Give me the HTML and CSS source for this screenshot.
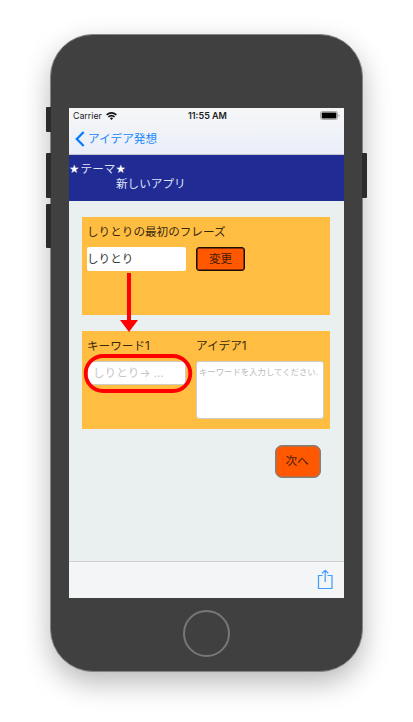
FILE: index.html
```html
<!DOCTYPE html>
<html lang="ja">
<head>
<meta charset="utf-8">
<title>アイデア発想</title>
<link rel="stylesheet" href="styles.css">
</head>
<body>
<div class="phone">
  <i class="side mute"></i><i class="side up"></i><i class="side down"></i><i class="side power"></i>
  <div class="screen">
    <header class="top">
      <div class="status">
        <span class="carrier">Carrier
          <svg width="11" height="8" viewBox="0 0 11 8" fill="none" stroke="#111" stroke-width="1.6"><path d="M.6 2.9Q5.5-1.1 10.4 2.9M2.4 4.9Q5.5 2.3 8.6 4.9"/><path d="M3.8 6.1Q5.5 4.8 7.2 6.1L5.5 7.900z" fill="#111" stroke="none"/></svg>
        </span>
        <b class="time">11:55 AM</b>
        <svg class="battery" width="20" height="9" viewBox="0 0 20 9"><rect x=".5" y=".5" width="17" height="8" rx="1.8" fill="#fff" stroke="#aaa"/><rect x="1.7" y="1.6" width="14.7" height="5.8" rx=".7" fill="#000"/><path d="M18.6 3v3q1-.5 1-1.5t-1-1.5" fill="#aaa"/></svg>
      </div>
      <div class="nav">
        <svg width="10" height="16" viewBox="0 0 10 16" fill="none" stroke="#087cff" stroke-width="2.3"><path d="M8.7 1 1.8 8l6.900 7"/></svg>
        <span>アイデア発想</span>
      </div>
    </header>
    <div class="theme"><div><span class="star">★</span>テーマ<span class="star">★</span></div><div class="theme-name">新しいアプリ</div></div>
    <main class="content">
      <section class="card">
        <div class="label">しりとりの最初のフレーズ</div>
        <div class="row"><div class="field">しりとり</div><div class="change">変更</div></div>
      </section>
      <section class="card">
        <div class="row"><div class="label key">キーワード1</div><div class="label">アイデア1</div></div>
        <div class="row"><div class="field hint">しりとり<span class="arrow">→</span> ...</div><div class="area">キーワードを入力してください.</div></div>
      </section>
      <div class="next">次へ</div>
    </main>
    <footer class="toolbar">
      <svg width="16" height="21" viewBox="0 0 16 21" fill="none" stroke="#3d9cff" stroke-width="1.2"><path d="M5.500 6.500H1.500v13H15v-13H10.500M8.200 13V1.500M5.200 4.200l3-2.900 3 2.900"/></svg>
    </footer>
  </div>
  <div class="home"></div>
  <svg class="marks" width="112" height="124" viewBox="0 0 112 124"><path d="M44 1h4v47h7L46 60 37 48h7z" fill="#f00"/><rect x="2.700" y="84" width="104.600" height="35" rx="17.500" fill="none" stroke="#f00" stroke-width="3.800"/></svg>
</div>
</body>
</html>
```
FILE: styles.css
```css
* { box-sizing: border-box; }
body {
  margin: 0;
  height: 722px;
  overflow: hidden;
  background: #fff;
  padding: 34px 0 0 50px;
  font: 11.6px/16px Inter, "Noto Sans CJK JP", sans-serif;
}
svg { display: block; flex: none; }
.phone {
  position: relative;
  width: 313px;
  height: 638px;
  padding: 73px 18px 0;
  border: 1px solid #858585;
  border-radius: 43px;
  background: #404040;
  box-shadow: 0 11px 28px rgba(0, 0, 0, .28);
}
.side { position: absolute; left: -5px; width: 5px; background: #2b2b2b; border-radius: 1px 0 0 1px; }
.mute { top: 72px; height: 25px; }
.up { top: 118px; height: 45px; }
.down { top: 169px; height: 44px; }
.power { left: auto; right: -5px; top: 118px; height: 45px; border-radius: 0 1px 1px 0; }
.screen {
  width: 275px;
  height: 490px;
  display: flex;
  flex-direction: column;
  background: #eaf0f0;
}
.top {
  height: 47px;
  border-bottom: 1px solid #c3c5ca;
  background: linear-gradient(#f6f7f8, #eaeef8);
}
.status {
  display: flex;
  align-items: center;
  height: 15px;
  padding: 0 4px;
  font: 9px/15px Inter, sans-serif;
  color: #222;
}
.carrier { display: flex; align-items: center; gap: 4px; width: 115px; font-size: 8.8px; }
.time { font-weight: 600; font-size: 9px; }
.battery { margin-left: auto; }
.nav { display: flex; align-items: center; gap: 3px; height: 32px; padding-left: 6px; color: #1688ff; }
.theme { height: 46px; padding-top: 7px; background: #202c94; color: #dfe3fa; line-height: 14.5px; }
.star { font: 11.6px/14px "DejaVu Sans", sans-serif; color: #fff; display: inline-block; width: 11.6px; }
.theme-name { padding-left: 47px; }
.content { height: 360px; padding: 16px 14.5px 0 13px; display: flex; flex-direction: column; }
.card { height: 98px; margin-bottom: 16px; padding: 7px 5px 0; background: #ffbd42; color: #37290e; }
.label { height: 23px; }
.key { width: 99px; }
.row { display: flex; gap: 10px; }
.field { width: 99px; height: 24px; border-radius: 2px; background: #fff; line-height: 24px; color: #333; }
.change {
  width: 49px;
  height: 24px;
  border: 1px solid #1b0d04;
  box-shadow: inset 0 0 0 .5px #1b0d04;
  border-radius: 3px;
  background: #ff5800;
  color: #451b04;
  text-align: center;
  line-height: 22px;
}
.hint { padding-left: 5px; border: 1px solid #ccc; border-radius: 3px; color: #c6c6c9; line-height: 22px; }
.arrow { font-family: Inter, sans-serif; }
.area {
  width: 128px;
  height: 58px;
  padding: 2px 0 0 2px;
  border: 1px solid #ccc;
  border-radius: 3px;
  background: #fff;
  color: #b9b9bc;
  font-size: 8.4px;
  white-space: nowrap;
}
.next {
  align-self: flex-end;
  width: 46px;
  height: 33px;
  margin-right: 9px;
  padding-right: 1px;
  border: 1px solid #808080;
  box-shadow: inset 0 0 0 .5px #808080;
  border-radius: 7px;
  background: #ff5800;
  color: #451b04;
  text-align: center;
  line-height: 31px;
}
.toolbar {
  height: 37px;
  display: flex;
  justify-content: flex-end;
  padding: 7px 11px 0;
  border-top: 1px solid #cbcfd0;
  background: #f3f5f7;
}
.home { width: 47px; height: 47px; margin: 12px auto 0; border: 2px solid #777; border-radius: 50%; }
.marks { position: absolute; left: 32px; top: 237px; }
```
